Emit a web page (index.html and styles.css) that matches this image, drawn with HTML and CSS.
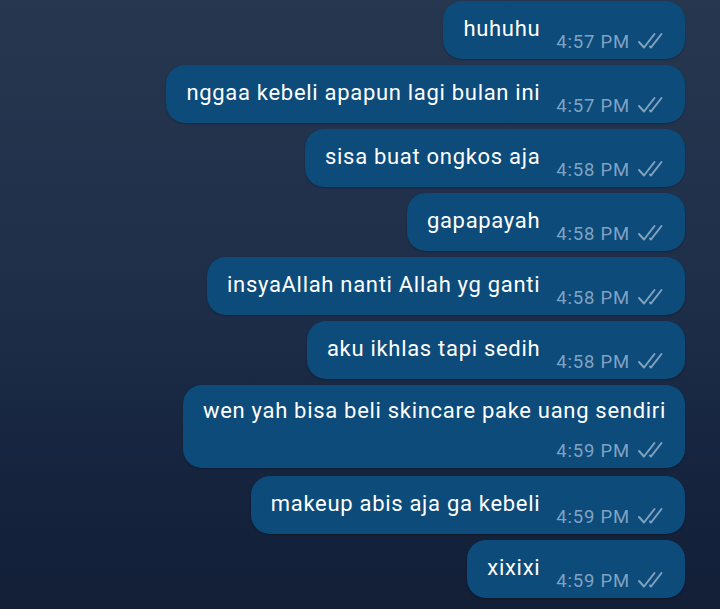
FILE: index.html
```html
<!DOCTYPE html>
<html>
<head>
<meta charset="utf-8">
<link rel="stylesheet" href="styles.css">
</head>
<body>
<div class="chat">
  <div class="bubble"><span class="text">huhuhu</span><span class="meta">4:57 PM<svg class="tick" viewBox="0 0 30 18"><path d="M3 10 L8 15.5 L18.5 2 M14 14.5 L15 15.5 L25.5 2"/></svg></span></div>
  <div class="bubble"><span class="text">nggaa kebeli apapun lagi bulan ini</span><span class="meta">4:57 PM<svg class="tick" viewBox="0 0 30 18"><path d="M3 10 L8 15.5 L18.5 2 M14 14.5 L15 15.5 L25.5 2"/></svg></span></div>
  <div class="bubble"><span class="text">sisa buat ongkos aja</span><span class="meta">4:58 PM<svg class="tick" viewBox="0 0 30 18"><path d="M3 10 L8 15.5 L18.5 2 M14 14.5 L15 15.5 L25.5 2"/></svg></span></div>
  <div class="bubble"><span class="text">gapapayah</span><span class="meta">4:58 PM<svg class="tick" viewBox="0 0 30 18"><path d="M3 10 L8 15.5 L18.5 2 M14 14.5 L15 15.5 L25.5 2"/></svg></span></div>
  <div class="bubble"><span class="text">insyaAllah nanti Allah yg ganti</span><span class="meta">4:58 PM<svg class="tick" viewBox="0 0 30 18"><path d="M3 10 L8 15.5 L18.5 2 M14 14.5 L15 15.5 L25.5 2"/></svg></span></div>
  <div class="bubble"><span class="text">aku ikhlas tapi sedih</span><span class="meta">4:58 PM<svg class="tick" viewBox="0 0 30 18"><path d="M3 10 L8 15.5 L18.5 2 M14 14.5 L15 15.5 L25.5 2"/></svg></span></div>
  <div class="bubble stacked"><span class="text">wen yah bisa beli skincare pake uang sendiri</span><span class="meta">4:59 PM<svg class="tick" viewBox="0 0 30 18"><path d="M3 10 L8 15.5 L18.5 2 M14 14.5 L15 15.5 L25.5 2"/></svg></span></div>
  <div class="bubble"><span class="text">makeup abis aja ga kebeli</span><span class="meta">4:59 PM<svg class="tick" viewBox="0 0 30 18"><path d="M3 10 L8 15.5 L18.5 2 M14 14.5 L15 15.5 L25.5 2"/></svg></span></div>
  <div class="bubble"><span class="text">xixixi</span><span class="meta">4:59 PM<svg class="tick" viewBox="0 0 30 18"><path d="M3 10 L8 15.5 L18.5 2 M14 14.5 L15 15.5 L25.5 2"/></svg></span></div>
</div>
</body>
</html>
```

FILE: styles.css
```css
html, body {
  margin: 0;
  padding: 0;
  width: 720px;
  height: 609px;
  overflow: hidden;
}
body {
  background: linear-gradient(180deg, #27374f 0%, #1f2f4a 45%, #15233d 80%, #131f37 100%);
  font-family: Roboto, "Noto Sans", sans-serif;
}
.chat {
  display: flex;
  flex-direction: column;
  align-items: flex-end;
  gap: 6px;
  padding: 1px 35px 0 0;
}
.bubble {
  display: flex;
  align-items: flex-end;
  max-width: 500px;
  background: #0c4b7a;
  border-radius: 19px;
  padding: 14px 19px 6px 20px;
  box-shadow: 0 1px 2px rgba(0, 0, 0, 0.25);
}
.bubble.stacked {
  flex-direction: column;
  align-items: flex-start;
  padding-top: 12px;
  padding-bottom: 6px;
  margin-bottom: 2px;
}
.text {
  color: #ffffff;
  font-size: 22px;
  letter-spacing: 0.7px;
  line-height: 28px;
  margin-bottom: 10px;
  white-space: nowrap;
}
.stacked .text {
  margin-bottom: 15px;
}
.meta {
  display: flex;
  align-items: center;
  margin-left: 16px;
  color: #80a2c1;
  font-size: 18.5px;
  letter-spacing: 0.8px;
  line-height: 22px;
  white-space: nowrap;
}
.stacked .meta {
  align-self: flex-end;
}
.tick {
  width: 30px;
  height: 18px;
  margin-left: 6px;
  margin-top: -2px;
}
.tick path {
  fill: none;
  stroke: #80a2c1;
  stroke-width: 2;
  stroke-linecap: round;
  stroke-linejoin: round;
}
```
